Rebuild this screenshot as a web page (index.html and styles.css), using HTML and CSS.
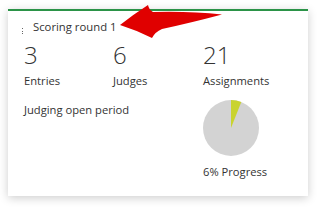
FILE: index.html
```html
<!DOCTYPE html>
<html>
<head>
<meta charset="utf-8">
<link rel="stylesheet" href="styles.css">
</head>
<body>
<div class="card">
  <div class="card-header">
    <span class="kebab"><i></i><i></i><i></i></span>
    <span class="title">Scoring round 1</span>
  </div>
  <div class="stats">
    <div class="stat"><div class="num">3</div><div class="label">Entries</div></div>
    <div class="stat"><div class="num">6</div><div class="label">Judges</div></div>
    <div class="stat"><div class="num">21</div><div class="label">Assignments</div></div>
  </div>
  <div class="lower">
    <div class="period">Judging open period</div>
    <div class="progress">
      <svg class="pie" width="56" height="56" viewBox="0 0 56 56">
        <circle cx="28" cy="28" r="28" fill="#d3d3d3"/>
        <path d="M28 28 L28 0 A28 28 0 0 1 38.3 1.96 Z" fill="#c9d32f"/>
      </svg>
      <div class="label">6% Progress</div>
    </div>
  </div>
  <svg class="arrow" width="320" height="60" viewBox="0 0 320 60">
    <path d="M120,25 Q134,14 148,5 Q149,10 153,12 Q190,11 222,14.5 Q190,23 162,29 Q155,32 152,38 Q136,30 120,25 Z" fill="#e00000"/>
  </svg>
</div>
</body>
</html>
```
FILE: styles.css
```css
html, body { background: #ffffff; }
body {
  margin: 0;
  padding: 9px 8px 13px 8px;
  font-family: "Open Sans", "Noto Sans", sans-serif;
  color: #333333;
}
.card {
  position: relative;
  box-sizing: border-box;
  width: 300px;
  height: 187px;
  background: #ffffff;
  border-top: 2px solid #2b9348;
  box-shadow: 0 2px 9px rgba(0, 0, 0, 0.2);
  padding: 8px 16px 0 16px;
}
.card-header {
  display: flex;
  align-items: flex-start;
  height: 16px;
}
.kebab {
  display: flex;
  flex-direction: column;
  gap: 1.5px;
  width: 3px;
  margin-left: -2px;
  margin-right: 8px;
  padding-top: 9px;
}
.kebab i {
  display: block;
  width: 1px;
  height: 1px;
  background: #666;
}
.title {
  font-size: 11.3px;
  line-height: 16px;
  color: #333;
}
.stats {
  display: grid;
  grid-template-columns: 89px 90px 1fr;
  margin-top: 6px;
}
.num {
  font-size: 24px;
  font-weight: 300;
  line-height: 28px;
  color: #333;
}
.label {
  font-size: 11.2px;
  line-height: 16px;
  margin-top: 4px;
  color: #333;
}
.lower {
  display: grid;
  grid-template-columns: 179px 1fr;
  margin-top: 13px;
}
.period {
  font-size: 11.2px;
  line-height: 16px;
}
.progress {
  margin-top: -2px;
}
.pie { display: block; }
.progress .label { margin-top: 8px; }
.arrow {
  position: absolute;
  left: -8px;
  top: -11px;
}
```
